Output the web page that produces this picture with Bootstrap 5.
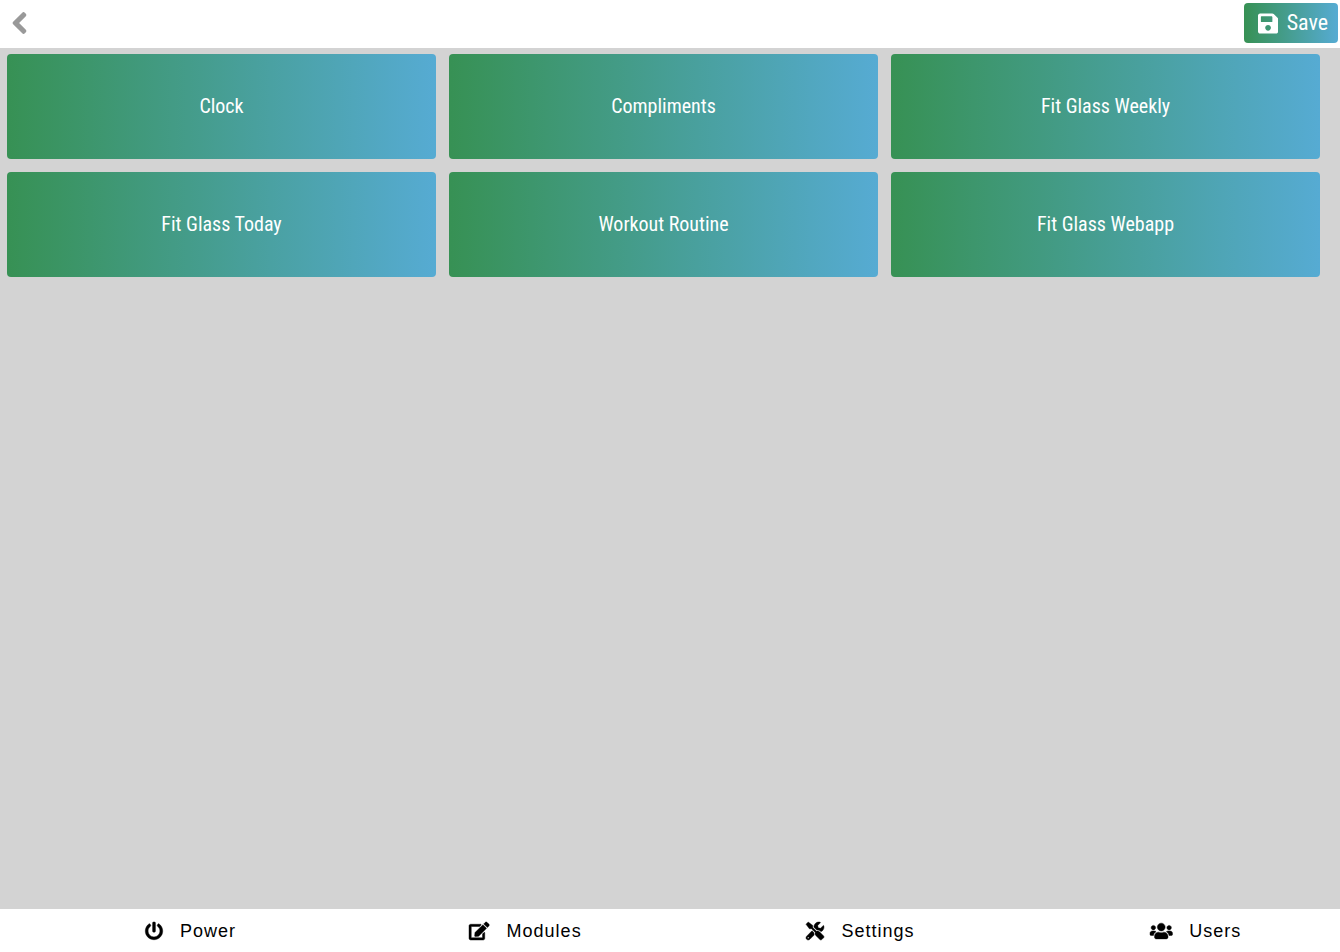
<!DOCTYPE html>
<html lang="en">
<head>
<meta charset="utf-8">
<meta name="viewport" content="width=device-width, initial-scale=1">
<title>Modules</title>
<link href="https://cdn.jsdelivr.net/npm/bootstrap@5.3.0/dist/css/bootstrap.min.css" rel="stylesheet">
<style>
body { background: #d3d3d3; font-family: "Roboto Condensed", "Liberation Sans Narrow", Roboto, sans-serif; }
.topbar { height: 48px; padding: 0 2px 2px 12px; }
.back-btn svg { height: 24px; color: #999; stroke: currentColor; stroke-width: 28; overflow: visible; }
.grad, .grad:hover, .grad:active { background: linear-gradient(to right, #379154, #56abd3); color: #fff; border: 0; border-radius: 4px; }
.save-btn { height: 40px; padding: 0 10px 0 14px; font-size: 22px; line-height: 26px; gap: 9px; }
.save-btn svg { height: 23px; }
.tiles { display: grid; grid-template-columns: repeat(3, 1fr); gap: 13px; padding: 6px 20px 7px 7px; }
.tile { height: 105px; padding: 0 12px 2px; font-size: 20px; line-height: 24px; }
.bottom-bar { height: 43px; }
.bottom-bar a { flex: 1 1 0; gap: 17px; padding-left: 46px; color: #000; font: 18px/24px "Liberation Sans", Arial, sans-serif; letter-spacing: 1px; }
.bottom-bar svg { height: 18px; stroke: currentColor; stroke-width: 12; overflow: visible; }
</style>
</head>
<body class="d-flex flex-column min-vh-100">
<header class="topbar bg-white d-flex align-items-center justify-content-between">
  <button type="button" class="back-btn btn p-0 border-0 d-flex" aria-label="Back">
    <svg viewBox="0 0 320 512" fill="currentColor"><path d="M34.52 239.03L228.87 44.69c9.37-9.37 24.57-9.37 33.94 0l22.67 22.67c9.36 9.36 9.37 24.52.04 33.9L131.49 256l154.02 154.75c9.34 9.38 9.32 24.54-.04 33.9l-22.67 22.67c-9.37 9.37-24.57 9.37-33.94 0L34.52 272.97c-9.37-9.37-9.37-24.57 0-33.94z"/></svg>
  </button>
  <button type="button" class="save-btn grad btn d-flex align-items-center">
    <svg viewBox="0 0 448 512" fill="currentColor" aria-hidden="true"><path d="M433.941 129.941l-83.882-83.882A48 48 0 0 0 316.118 32H48C21.49 32 0 53.49 0 80v352c0 26.51 21.49 48 48 48h352c26.51 0 48-21.49 48-48V163.882a48 48 0 0 0-14.059-33.941zM224 416c-35.346 0-64-28.654-64-64 0-35.346 28.654-64 64-64s64 28.654 64 64c0 35.346-28.654 64-64 64zm96-304.52V212c0 6.627-5.373 12-12 12H76c-6.627 0-12-5.373-12-12V108c0-6.627 5.373-12 12-12h228.52c3.183 0 6.235 1.264 8.485 3.515l3.48 3.48A11.996 11.996 0 0 1 320 111.48z"/></svg>
    <span>Save</span>
  </button>
</header>
<main class="tiles">
  <button type="button" class="tile grad btn">Clock</button>
  <button type="button" class="tile grad btn">Compliments</button>
  <button type="button" class="tile grad btn">Fit Glass Weekly</button>
  <button type="button" class="tile grad btn">Fit Glass Today</button>
  <button type="button" class="tile grad btn">Workout Routine</button>
  <button type="button" class="tile grad btn">Fit Glass Webapp</button>
</main>
<nav class="bottom-bar bg-white d-flex mt-auto">
  <a href="#power" class="d-flex align-items-center justify-content-center text-decoration-none">
    <svg viewBox="0 0 512 512" fill="currentColor" aria-hidden="true"><path d="M400 54.1c63 45 104 118.6 104 201.9 0 136.8-110.8 247.7-247.5 248C120 504.3 8.2 393 8 256.4 7.9 173.1 48.9 99.3 111.8 54.2c11.7-8.3 28-4.8 35 7.7L162.6 90c5.9 10.5 3.1 23.8-6.6 31-41.5 30.8-68 79.6-68 134.9-.1 92.3 74.5 168.1 168 168.1 91.6 0 168.6-74.2 168-169.1-.3-51.8-24.7-101.8-68.1-134-9.7-7.2-12.4-20.5-6.5-30.9l15.8-28.1c7-12.4 23.2-16.1 34.8-7.8zM296 264V24c0-13.3-10.7-24-24-24h-32c-13.3 0-24 10.7-24 24v240c0 13.3 10.7 24 24 24h32c13.3 0 24-10.7 24-24z"/></svg>
    <span>Power</span>
  </a>
  <a href="#modules" class="d-flex align-items-center justify-content-center text-decoration-none">
    <svg viewBox="0 0 576 512" fill="currentColor" aria-hidden="true"><path d="M402.6 83.2l90.2 90.2c3.8 3.8 3.8 10 0 13.8L274.4 405.6l-92.8 10.3c-12.4 1.4-22.9-9.1-21.5-21.5l10.3-92.8L388.8 83.2c3.8-3.8 10-3.8 13.8 0zm162-22.9l-48.8-48.8c-15.2-15.2-39.9-15.2-55.2 0l-35.4 35.4c-3.8 3.8-3.8 10 0 13.8l90.2 90.2c3.8 3.8 10 3.8 13.8 0l35.4-35.4c15.2-15.3 15.2-40 0-55.2zM384 346.2V448H64V128h229.8c3.2 0 6.2-1.3 8.5-3.5l40-40c7.6-7.6 2.2-20.5-8.5-20.5H48C21.5 64 0 85.5 0 112v352c0 26.5 21.5 48 48 48h352c26.5 0 48-21.5 48-48V306.2c0-10.7-12.9-16-20.5-8.5l-40 40c-2.2 2.3-3.5 5.3-3.5 8.5z"/></svg>
    <span>Modules</span>
  </a>
  <a href="#settings" class="d-flex align-items-center justify-content-center text-decoration-none">
    <svg viewBox="0 0 512 512" fill="currentColor" aria-hidden="true"><path d="M501.1 395.7L384 278.6c-23.1-23.1-57.6-27.6-85.4-13.9L192 158.1V96L64 0 0 64l96 128h62.1l106.6 106.6c-13.6 27.8-9.2 62.3 13.9 85.4l117.1 117.1c14.6 14.6 38.2 14.6 52.7 0l52.7-52.7c14.5-14.6 14.5-38.2 0-52.7zM331.7 225c28.3 0 54.9 11 74.9 31l19.4 19.4c15.8-6.9 30.8-16.5 43.8-29.5 37.1-37.1 49.7-89.3 37.9-136.7-2.2-9-13.5-12.1-20.1-5.5l-74.4 74.4-67.9-11.3L334 98.9l74.4-74.4c6.6-6.6 3.4-17.9-5.7-20.2-47.4-11.7-99.6.9-136.6 37.9-28.5 28.5-41.9 66.1-41.2 103.6l82.1 82.1c8.1-1.9 16.5-2.9 24.7-2.9zm-103.9 82l-56.7-56.7L18.7 402.8c-25 25-25 65.5 0 90.5s65.5 25 90.5 0l123.6-123.6c-7.6-19.9-9.9-41.6-5-62.7zM64 472c-13.2 0-24-10.8-24-24 0-13.3 10.7-24 24-24s24 10.7 24 24c0 13.2-10.7 24-24 24z"/></svg>
    <span>Settings</span>
  </a>
  <a href="#users" class="d-flex align-items-center justify-content-center text-decoration-none">
    <svg viewBox="0 0 640 512" fill="currentColor" aria-hidden="true"><path d="M96 224c35.3 0 64-28.7 64-64s-28.7-64-64-64-64 28.7-64 64 28.7 64 64 64zm448 0c35.3 0 64-28.7 64-64s-28.7-64-64-64-64 28.7-64 64 28.7 64 64 64zm32 32h-64c-17.6 0-33.5 7.1-45.1 18.6 40.3 22.1 68.9 62 75.1 109.4h66c17.7 0 32-14.3 32-32v-32c0-35.3-28.7-64-64-64zm-256 0c61.9 0 112-50.1 112-112S381.9 32 320 32 208 82.1 208 144s50.1 112 112 112zm76.8 32h-8.3c-20.8 10-43.9 16-68.5 16s-47.6-6-68.5-16h-8.3C179.6 288 128 339.6 128 403.2V432c0 26.5 21.5 48 48 48h288c26.5 0 48-21.5 48-48v-28.8c0-63.6-51.6-115.2-115.2-115.2zm-223.7-13.4C161.5 263.1 145.6 256 128 256H64c-35.3 0-64 28.7-64 64v32c0 17.7 14.3 32 32 32h65.9c6.3-47.4 34.9-87.3 75.2-109.4z"/></svg>
    <span>Users</span>
  </a>
</nav>
<script src="https://cdn.jsdelivr.net/npm/bootstrap@5.3.0/dist/js/bootstrap.bundle.min.js"></script>
</body>
</html>
